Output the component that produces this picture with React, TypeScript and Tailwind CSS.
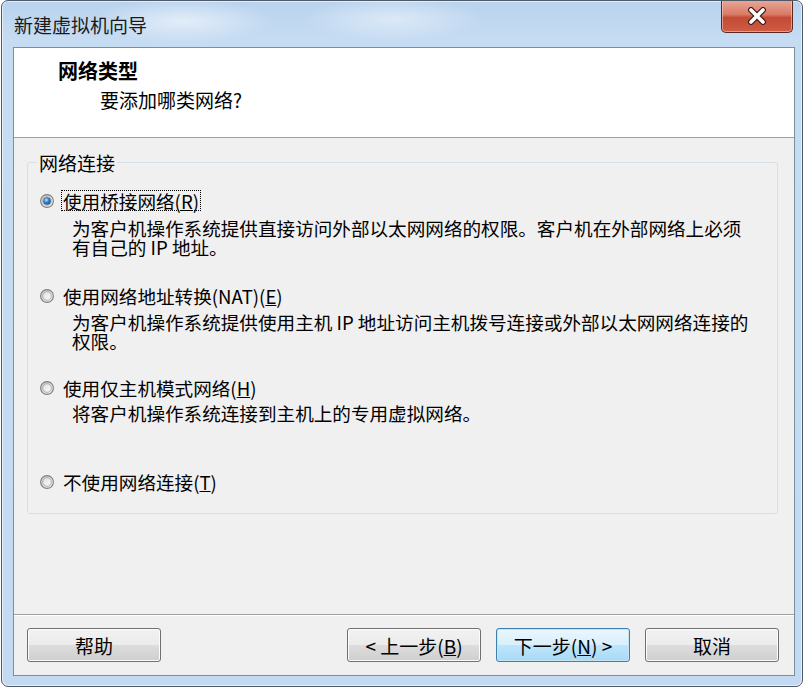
import React, { useState } from "react";

type NetOption = {
  id: string;
  label: string;
  key: string;
  lines: string[];
  labelGap: string;
  descGap: string;
};

const options: NetOption[] = [
  {
    id: "bridged",
    label: "使用桥接网络",
    key: "R",
    lines: [
      "为客户机操作系统提供直接访问外部以太网网络的权限。客户机在外部网络上必须",
      "有自己的 IP 地址。",
    ],
    labelGap: "mt-0",
    descGap: "mt-[7px]",
  },
  {
    id: "nat",
    label: "使用网络地址转换(NAT)",
    key: "E",
    lines: [
      "为客户机操作系统提供使用主机 IP 地址访问主机拨号连接或外部以太网网络连接的",
      "权限。",
    ],
    labelGap: "mt-[29px]",
    descGap: "mt-[6px]",
  },
  {
    id: "hostonly",
    label: "使用仅主机模式网络",
    key: "H",
    lines: ["将客户机操作系统连接到主机上的专用虚拟网络。"],
    labelGap: "mt-[27px]",
    descGap: "mt-[5px]",
  },
  {
    id: "none",
    label: "不使用网络连接",
    key: "T",
    lines: [],
    labelGap: "mt-[49px]",
    descGap: "mt-0",
  },
];

const Radio: React.FC<{ checked: boolean }> = ({ checked }) => (
  <svg width="14" height="14" viewBox="0 0 14 14" className="shrink-0">
    <defs>
      <linearGradient id="ring" x1="0" y1="0" x2="1" y2="1">
        <stop offset="0" stopColor="#c4c4c4" />
        <stop offset="1" stopColor="#f6f6f6" />
      </linearGradient>
      <linearGradient id="inner" x1="0" y1="0" x2="1" y2="1">
        <stop offset="0" stopColor="#dcdcdc" />
        <stop offset="1" stopColor="#ffffff" />
      </linearGradient>
      <radialGradient id="dot" cx="0.4" cy="0.35" r="0.7">
        <stop offset="0" stopColor="#c8e6ff" />
        <stop offset="0.45" stopColor="#3b8ad6" />
        <stop offset="1" stopColor="#0a4a8e" />
      </radialGradient>
    </defs>
    <circle cx="7" cy="7" r="6.4" fill="url(#ring)" stroke="#7f7f7f" strokeWidth="1.1" />
    <circle cx="7" cy="7" r="4.3" fill="url(#inner)" stroke="#a9a9a9" strokeWidth="0.9" />
    {checked && <circle cx="7" cy="7" r="3.6" fill="url(#dot)" stroke="#2a5f96" strokeWidth="0.5" />}
  </svg>
);

const WinButton: React.FC<{ children: React.ReactNode; primary?: boolean }> = ({ children, primary }) => (
  <button
    className={
      "w-[134px] h-[34px] rounded-[3px] border text-[19px] leading-[19px] text-black flex items-center justify-center " +
      (primary
        ? "border-[#3c7fb1] bg-[linear-gradient(#eaf6fd_0%,#d9f0fc_50%,#bee6fd_50%,#a7d9f5_100%)] shadow-[inset_0_0_0_1px_#c4e5f6]"
        : "border-[#707070] bg-[linear-gradient(#f2f2f2_0%,#ebebeb_50%,#dddddd_50%,#cfcfcf_100%)] shadow-[inset_0_0_0_1px_#fcfcfc]")
    }
  >
    {children}
  </button>
);

export default function App() {
  const [selected, setSelected] = useState("bridged");

  return (
    <div className="w-[806px] h-[690px] bg-white font-['Noto_Sans_CJK_SC','Microsoft_YaHei',sans-serif]">
      <div className="ml-px w-[802px] h-[687px] rounded-[7px] border border-[#4e5a68] bg-[linear-gradient(180deg,#b9d3ee_0px,#c6dcf3_40px,#c3daf2_100%)] shadow-[inset_0_0_0_1px_rgba(255,255,255,0.6)] flex flex-col pl-[11px] pr-[7px] pb-[10px] overflow-hidden">
        {/* Title bar */}
        <div className="h-[46px] shrink-0 flex items-start justify-between bg-[radial-gradient(ellipse_90px_22px_at_170px_20px,rgba(255,255,255,0.55),transparent),radial-gradient(ellipse_90px_22px_at_380px_18px,rgba(255,255,255,0.45),transparent)]">
          <div className="pl-px pt-[13px] text-[19px] leading-[22px] text-[#1a1a1a]">新建虚拟机向导</div>
          <div className="-mt-px mr-[2px] w-[72px] h-[33px] rounded-b-[5px] border border-[#5a2a22] border-t-0 bg-[linear-gradient(#e9a898_0%,#d97b66_45%,#c44a36_55%,#cf5c43_100%)] shadow-[inset_0_0_0_1px_rgba(255,220,210,0.5)] flex items-center justify-center">
            <svg width="22" height="18" viewBox="0 0 22 18">
              <path d="M5 3 L17 15 M17 3 L5 15" stroke="#3b1c16" strokeWidth="6" strokeLinecap="round" />
              <path d="M5 3 L17 15 M17 3 L5 15" stroke="#ffffff" strokeWidth="3.6" strokeLinecap="round" />
            </svg>
          </div>
        </div>

        {/* Client area */}
        <div className="flex-1 flex flex-col border border-[#7d8e9f] bg-[#f0f0f0]">
          <div className="h-[90px] shrink-0 bg-white border-b border-[#a0a0a0] pl-[44px] pt-[11px]">
            <div className="text-[20px] leading-[24px] font-bold text-black">网络类型</div>
            <div className="pl-[42px] mt-[5px] text-[19px] leading-[24px] text-black">要添加哪类网络?</div>
          </div>

          <div className="flex-1 border-b border-[#a0a0a0] shadow-[0_1px_0_#ffffff]">
            <fieldset className="ml-[13px] mr-[16px] mt-[15px] rounded-[3px] border border-[#d5dfe5] pb-[21px] pt-[18px]">
              <legend className="ml-[9px] px-[2px] text-[19px] leading-[19px] text-black">网络连接</legend>
              {options.map((o) => (
                <div key={o.id} className={o.labelGap}>
                  <label className="flex items-center cursor-default" onClick={() => setSelected(o.id)}>
                    <span className="ml-[12px] mr-[7px] flex">
                      <Radio checked={selected === o.id} />
                    </span>
                    <span
                      className={
                        "text-[18.6px] leading-[19px] text-black whitespace-nowrap px-px border border-dotted " +
                        (selected === o.id ? "border-black" : "border-transparent")
                      }
                    >
                      {o.label}(<u>{o.key}</u>)
                    </span>
                  </label>
                  {o.lines.length > 0 && (
                    <p className={"ml-[44px] text-[18.6px] leading-[19px] text-black whitespace-nowrap " + o.descGap}>
                      {o.lines.map((l, i) => (
                        <React.Fragment key={l}>
                          {i > 0 && <br />}
                          {l}
                        </React.Fragment>
                      ))}
                    </p>
                  )}
                </div>
              ))}
            </fieldset>
          </div>

          <div className="h-[60px] shrink-0 flex items-start pt-[13px] pl-[13px] pr-[15px]">
            <WinButton>帮助</WinButton>
            <div className="flex-1" />
            <div className="flex gap-[15px]">
              <WinButton>
                &lt; 上一步(<u>B</u>)
              </WinButton>
              <WinButton primary>
                下一步(<u>N</u>) &gt;
              </WinButton>
              <WinButton>取消</WinButton>
            </div>
          </div>
        </div>
      </div>
    </div>
  );
}
